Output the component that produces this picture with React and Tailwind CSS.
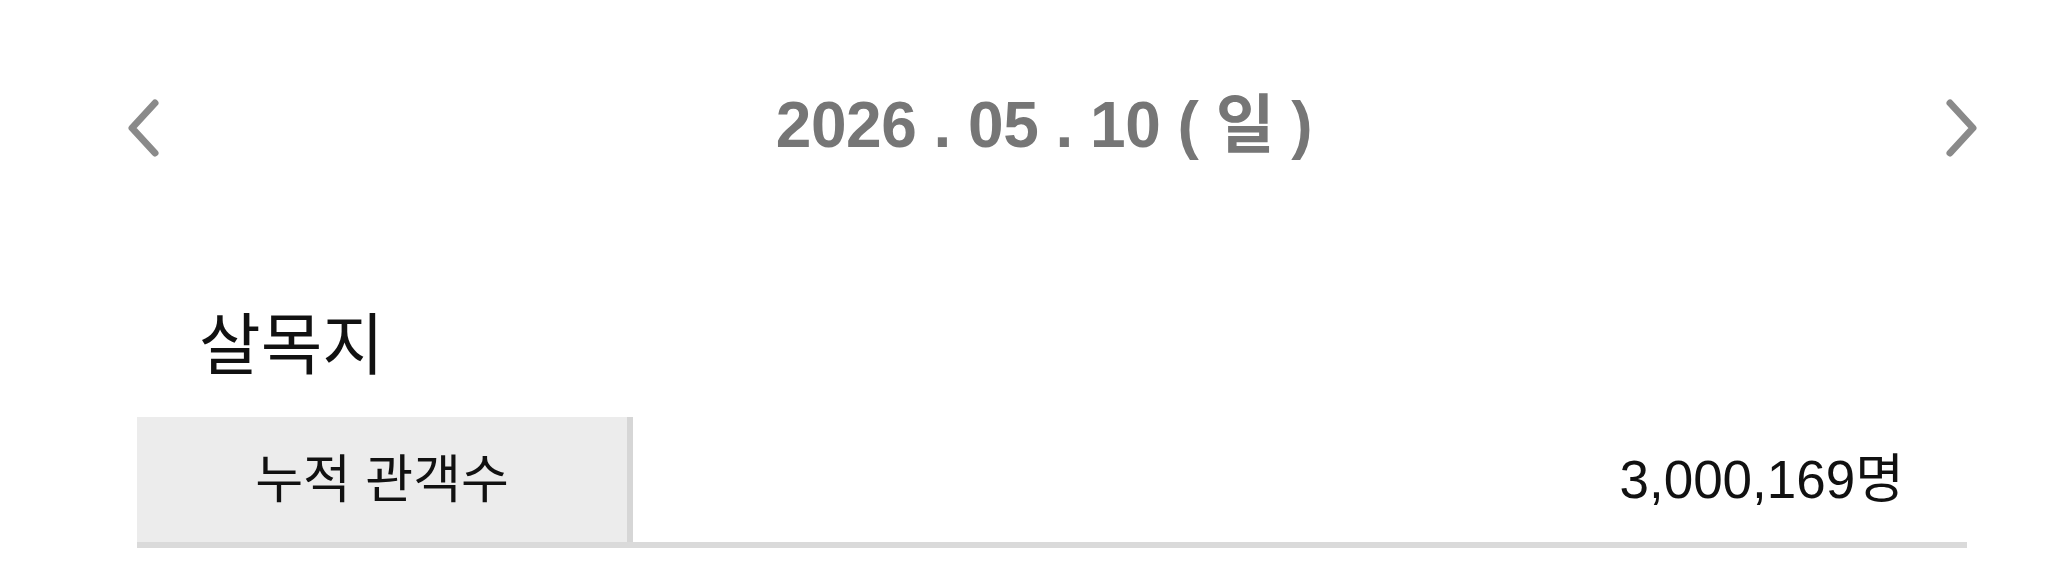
export default function App() {
  const Chevron = ({ dir }) => (
    <svg width="34" height="60" viewBox="0 0 34 60" fill="none" className="shrink-0">
      <polyline
        points={dir === "left" ? "29,5 6,30 29,55" : "5,5 28,30 5,55"}
        stroke="#8a8a8a"
        strokeWidth="7"
        strokeLinecap="round"
        strokeLinejoin="round"
      />
    </svg>
  );

  return (
    <div className="w-[2053px] h-[582px] bg-white font-['Liberation_Sans','Noto_Sans_CJK_KR',sans-serif] text-[#111111]">
      {/* date navigation */}
      <div className="flex items-center pt-[98px] pl-[126px] pr-[74px] h-[158px]">
        <Chevron dir="left" />
        <div className="flex-1 text-center pr-[17px] pb-[6px] text-[64px] leading-none font-bold text-[#767676] tracking-[-0.5px]">
          2026 . 05 . 10 ( 일 )
        </div>
        <Chevron dir="right" />
      </div>

      <div className="pl-[137px] pr-[86px] pt-[154px]">
        <h2 className="pl-[62px] text-[67px] leading-none font-normal">살목지</h2>

        {/* stats table */}
        <div className="mt-[38px] flex h-[131px] border-b-[6px] border-[#dadada]">
          <div className="w-[496px] bg-[#ececec] border-r-[6px] border-[#d6d6d6] flex items-center justify-center text-[52px] leading-none">
            누적 관객수
          </div>
          <div className="flex-1 flex items-center justify-end pr-[63px] text-[53px] leading-none">
            3,000,169명
          </div>
        </div>
      </div>
    </div>
  );
}
